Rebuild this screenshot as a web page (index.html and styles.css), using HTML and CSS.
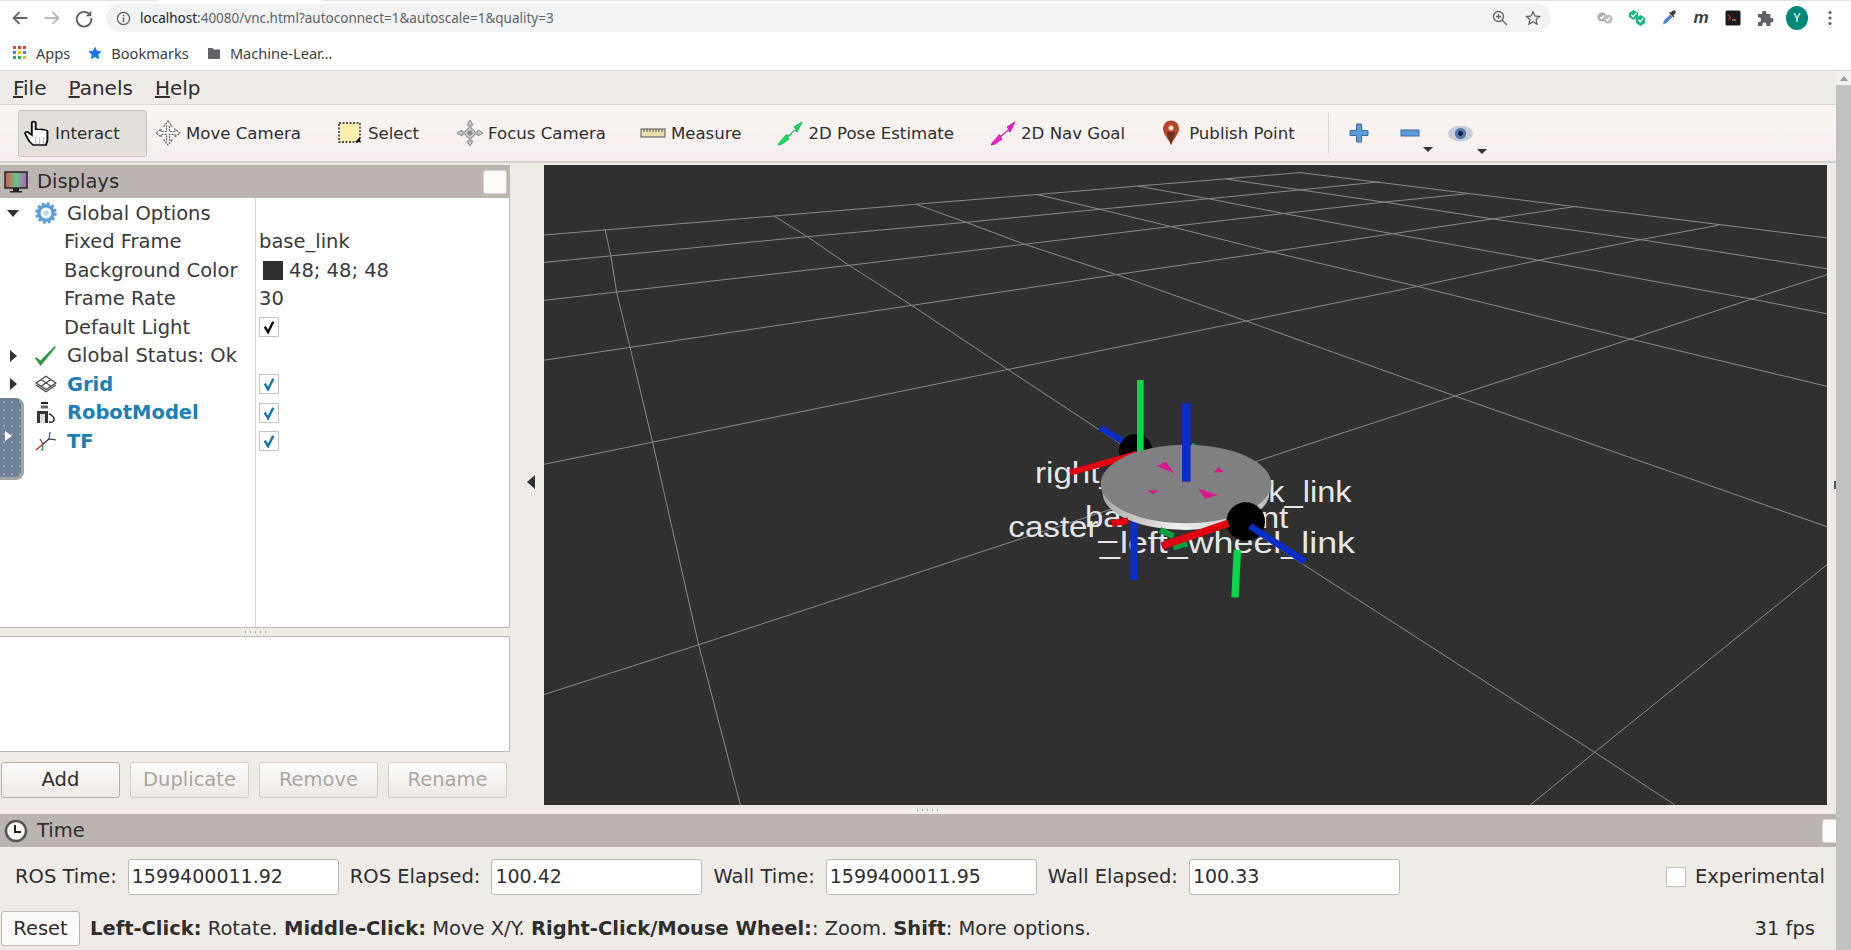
FILE: index.html
```html
<!DOCTYPE html>
<html lang="en">
<head>
    <meta charset="UTF-8">
    <meta name="viewport" content="width=device-width, initial-scale=1.0">
    <title>RViz - noVNC</title>
    <link rel="stylesheet" href="styles.css">
</head>
<body>
    <!-- Browser chrome -->
    <div class="tabline"><div class="tabline-gap"></div></div>
    <div class="nav-bar">
        <svg class="nav-icon" viewBox="0 0 24 24"><path d="M20 12H5M11.5 5.5L5 12l6.500 6.500" fill="none" stroke="#5f6368" stroke-width="2"/></svg>
        <svg class="nav-icon" viewBox="0 0 24 24"><path d="M4 12h15M12.500 5.500L19 12l-6.500 6.500" fill="none" stroke="#b4b7bb" stroke-width="2"/></svg>
        <svg class="nav-icon" viewBox="0 0 24 24"><path d="M18.500 8.500A8 8 0 1 0 20 12" fill="none" stroke="#5f6368" stroke-width="2"/><path d="M20 4v6h-6z" fill="#5f6368"/></svg>
        <div class="address">
            <svg class="info-icon" viewBox="0 0 16 16"><circle cx="8" cy="8" r="6.500" fill="none" stroke="#5f6368" stroke-width="1.400"/><path d="M7.200 7h1.600v5H7.200zM7.200 4h1.600v1.600H7.200z" fill="#5f6368"/></svg>
            <span class="url"><b>localhost</b>:40080/vnc.html?autoconnect=1&amp;autoscale=1&amp;quality=3</span>
            <svg class="lens-icon" viewBox="0 0 16 16"><circle cx="6.500" cy="6.500" r="5" fill="none" stroke="#5f6368" stroke-width="1.300"/><path d="M10.200 10.200L15 15M4 6.500h5M6.500 4v5" fill="none" stroke="#5f6368" stroke-width="1.300"/></svg>
            <svg class="star-icon" viewBox="0 0 16 16"><path d="M8 1.800l1.900 4.200 4.600.5-3.400 3.100.9 4.500L8 11.800l-4 2.300.9-4.500L1.500 6.500 6.100 6z" fill="none" stroke="#5f6368" stroke-width="1.300"/></svg>
        </div>
        <div class="extensions">
            <svg class="ext" viewBox="0 0 18 18"><circle cx="6" cy="8" r="4.500" fill="#aaa"/><circle cx="12" cy="10" r="4.500" fill="#bbb"/><path d="M4 8l1.500 1.500L8 6.500M10 10l1.500 1.500L14 8.500" fill="none" stroke="#fff" stroke-width="1.200"/></svg>
            <svg class="ext" viewBox="0 0 18 18"><path d="M5.500 1l4.500 3v4l-4.500 3L1 8V4z" fill="#14b47c"/><path d="M12.500 6l4.500 3v5l-4.500 3L8 14V9z" fill="#14b47c"/><path d="M3.200 5.800l2 2 3-3.500M10.200 10.800l2 2 3-3.500" fill="none" stroke="#fff" stroke-width="1.400"/></svg>
            <svg class="ext" viewBox="0 0 18 18"><path d="M3 15.500l1-4L10 5.500l2.500 2.500-6 6z" fill="#4a86d8"/><path d="M9.500 4.500l4 4 1-1-1-1 2-2.500a1.800 1.800 0 0 0-2.500-2.500l-2.500 2-1-1z" fill="#3c4043"/></svg>
            <span class="ext ext-m">m</span>
            <svg class="ext" viewBox="0 0 18 18"><rect x="1.500" y="1.500" width="15" height="15" rx="1.500" fill="#1b1b1b"/><path d="M4 6l3 2.500L4 11" fill="none" stroke="#e8453c" stroke-width="1"/><path d="M8 11h4" stroke="#f2b632" stroke-width="1"/></svg>
            <svg class="ext" viewBox="0 0 18 18"><path d="M2 5h4V4a2.200 2.200 0 0 1 4.400 0v1h4v4h1a2.200 2.200 0 0 1 0 4.400h-1V17h-4v-1.500a2 2 0 0 0-4 0V17H2v-4h1a2.200 2.200 0 0 0 0-4.400H2z" fill="#5f6368"/></svg>
            <span class="avatar">Y</span>
            <svg class="ext" viewBox="0 0 18 18"><circle cx="9" cy="3.500" r="1.600" fill="#5f6368"/><circle cx="9" cy="9" r="1.600" fill="#5f6368"/><circle cx="9" cy="14.500" r="1.600" fill="#5f6368"/></svg>
        </div>
    </div>
    <div class="bookmarks">
        <svg class="mark-icon" viewBox="0 0 14 14">
            <g fill="#ea4335"><rect x="0" y="0" width="3" height="3"/><rect x="5" y="0" width="3" height="3"/></g><rect x="10" y="0" width="3" height="3" fill="#ea4335"/>
            <rect x="0" y="5" width="3" height="3" fill="#4285f4"/><rect x="5" y="5" width="3" height="3" fill="#fbbc05"/><rect x="10" y="5" width="3" height="3" fill="#4285f4"/>
            <rect x="0" y="10" width="3" height="3" fill="#34a853"/><rect x="5" y="10" width="3" height="3" fill="#34a853"/><rect x="10" y="10" width="3" height="3" fill="#fbbc05"/>
        </svg>
        <span class="mark">Apps</span>
        <svg class="mark-icon" viewBox="0 0 14 14"><path d="M7 .5l2 4.300 4.700.6-3.400 3.200.9 4.700L7 11l-4.200 2.300.9-4.700L.3 5.400 5 4.800z" fill="#1a73e8"/></svg>
        <span class="mark">Bookmarks</span>
        <svg class="mark-icon" viewBox="0 0 14 14"><path d="M1 2h4.500L7 3.500h6V12a1 1 0 0 1-1 1H2a1 1 0 0 1-1-1z" fill="#5f6368"/></svg>
        <span class="mark">Machine-Lear…</span>
    </div>

    <div class="page">
        <div class="rviz">
            <div class="menu-bar">
                <span><u>F</u>ile</span>
                <span><u>P</u>anels</span>
                <span><u>H</u>elp</span>
            </div>

            <div class="tool-bar">
                <div class="tool active">
                    <svg class="tool-icon" viewBox="0 0 26 26"><g transform="scale(1.300 1)"><path d="M7 25c-2-2-3-3-4-6l-2-5c-1-2 2-3 3-1l2 2V3c0-2 3-2 3 0v7c0-1 3-1 3 0 0-1 3-1 3 .5 0-1 3-1 3 1V20c0 2-1 3-1 5z" fill="#fff" stroke="#111" stroke-width="1.500"/><path d="M9 17v7M12 17v7M15 17v7" stroke="#bbb" stroke-width=".8"/></g></svg>
                    Interact
                </div>
                <div class="tool tool-move">
                    <svg class="tool-icon" viewBox="0 0 26 26"><path d="M13 1l4 5h-2.500v5.500H20V9l5 4-5 4v-2.500h-5.500V20H17l-4 5-4-5h2.500v-5.500H6V17l-5-4 5-4v2.500h5.500V6H9z" fill="#eee" stroke="#666" stroke-width="1.200" stroke-dasharray="2 1"/></svg>
                    Move Camera
                </div>
                <div class="tool tool-select">
                    <svg class="tool-icon" viewBox="0 0 26 26"><rect x="2" y="3" width="21" height="19" fill="#fbeeb0" stroke="#222" stroke-width="1.400" stroke-dasharray="2 1.500"/><path d="M18 22h5v-5z" fill="#111"/></svg>
                    Select
                </div>
                <div class="tool tool-focus">
                    <svg class="tool-icon" viewBox="0 0 26 26"><path d="M13 0l3 5h-2v3.200a5 5 0 0 1 3.800 3.800H21v-2l5 3-5 3v-2h-3.200a5 5 0 0 1-3.800 3.800V21h2l-3 5-3-5h2v-3.200A5 5 0 0 1 8.200 14H5v2l-5-3 5-3v2h3.200A5 5 0 0 1 12 8.200V5h-2z" fill="#c9c9c9" stroke="#888" stroke-width="1"/><circle cx="13" cy="13" r="2.500" fill="#888"/></svg>
                    Focus Camera
                </div>
                <div class="tool">
                    <svg class="tool-icon" viewBox="0 0 26 26"><rect x="1" y="9" width="24" height="8" fill="#eadfae" stroke="#555" stroke-width="1"/><path d="M4 9v3M7 9v3M10 9v3M13 9v3M16 9v3M19 9v3M22 9v3" stroke="#555" stroke-width="1"/></svg>
                    Measure
                </div>
                <div class="tool">
                    <svg class="tool-icon" viewBox="0 0 26 26"><path d="M25 2L17 7l2 2.500-8 7-1.500-2L3 22l-2 3 4-1 7-5-2-2 8-7 2 2z" fill="#10e060" stroke="#0fbc55" stroke-width="1"/></svg>
                    2D Pose Estimate
                </div>
                <div class="tool tool-nav">
                    <svg class="tool-icon" viewBox="0 0 26 26"><path d="M25 2L17 7l2 2.500-8 7-1.500-2L3 22l-2 3 4-1 7-5-2-2 8-7 2 2z" fill="#f020c0" stroke="#d018a4" stroke-width="1"/></svg>
                    2D Nav Goal
                </div>
                <div class="tool tool-narrow">
                    <svg class="tool-icon" viewBox="0 0 18 26"><path d="M9 25C6 18 1 14 1 8.500a8 8 0 0 1 16 0C17 14 12 18 9 25z" fill="#b5442a"/><path d="M9 25C7 19 5 15 5 12h8c0 3-2 7-4 13z" fill="#6b3320"/><circle cx="9" cy="8" r="2.500" fill="#fbe3c8"/></svg>
                    Publish Point
                </div>
                <div class="tool-sep"></div>
                <svg class="view-icon" viewBox="0 0 20 20"><path d="M7.500 1h5v6.500H19v5h-6.500V19h-5v-6.500H1v-5h6.500z" fill="#5b9bd8" stroke="#3a6ea8" stroke-width="1"/></svg>
                <div class="view-drop">
                    <svg class="view-icon" viewBox="0 0 20 20"><rect x="1" y="7" width="18" height="6" fill="#5b9bd8" stroke="#3a6ea8" stroke-width="1"/></svg>
                    <span class="drop-arrow"></span>
                </div>
                <div class="view-drop">
                    <svg class="view-icon eye" viewBox="0 0 24 20"><ellipse cx="12" cy="10" rx="11" ry="7" fill="#c6ccd8"/><circle cx="12" cy="10" r="5" fill="#5a74a8"/><circle cx="12" cy="10" r="2.200" fill="#0c1c48"/></svg>
                    <span class="drop-arrow"></span>
                </div>
            </div>

            <div class="workspace">
                <div class="left-dock">
                    <div class="dock-title">
                        <svg class="title-icon" viewBox="0 0 24 24">
                            <defs>
                                <linearGradient id="rainbow" x1="0" x2="1"><stop offset="0" stop-color="#d8564a"/><stop offset=".5" stop-color="#6fc28a"/><stop offset="1" stop-color="#b060b8"/></linearGradient>
                            </defs>
                            <rect x="1" y="2" width="22" height="16" fill="url(#rainbow)" stroke="#222" stroke-width="1.500"/><path d="M9 18h6v3H9zM6 21h12v1.500H6z" fill="#222"/>
                        </svg>
                        <span>Displays</span>
                        <span class="title-check"></span>
                    </div>
                    <div class="tree">
                        <div class="row">
                            <span class="arrow-down"></span>
                            <svg class="row-icon" viewBox="0 0 20 20"><circle cx="10" cy="10" r="6.500" fill="none" stroke="#5a9cd8" stroke-width="3"/><circle cx="10" cy="10" r="8.500" fill="none" stroke="#5a9cd8" stroke-width="2.500" stroke-dasharray="2.500 2"/><circle cx="10" cy="10" r="2.500" fill="#b8d8f4"/></svg>
                            <span class="name">Global Options</span>
                        </div>
                        <div class="row child"><span class="name">Fixed Frame</span><span class="value">base_link</span></div>
                        <div class="row child"><span class="name">Background Color</span><span class="value"><i class="swatch"></i>48; 48; 48</span></div>
                        <div class="row child"><span class="name">Frame Rate</span><span class="value">30</span></div>
                        <div class="row child"><span class="name">Default Light</span><span class="value"><svg class="check dark" viewBox="0 0 19 19"><path d="M5 9l3.500 6L14 4" fill="none" stroke-width="2.600"/></svg></span></div>
                        <div class="row">
                            <span class="arrow-right"></span>
                            <svg class="row-icon" viewBox="0 0 20 20"><path d="M1 11l4 3L18 1l1 1L5 19 0 12z" fill="#2b9a3e"/></svg>
                            <span class="name">Global Status: Ok</span>
                        </div>
                        <div class="row">
                            <span class="arrow-right"></span>
                            <svg class="row-icon" viewBox="0 0 20 20"><path d="M10 3l9 6-9 6-9-6zM5.500 6l9 6M14.500 6l-9 6M1 11l9 6 9-6" fill="none" stroke="#444" stroke-width="1.100"/></svg>
                            <span class="name active-name">Grid</span>
                            <span class="value"><svg class="check" viewBox="0 0 19 19"><path d="M5 9l3.500 6L14 4" fill="none" stroke-width="2.600"/></svg></span>
                        </div>
                        <div class="row">
                            <svg class="row-icon" viewBox="0 0 22 22"><rect x="6" y="0" width="7" height="2" fill="#222"/><rect x="6" y="3.500" width="7" height="3" fill="#666"/><path d="M2 9h11v12H2z" fill="#333"/><path d="M5 12h5v9H5z" fill="#ddd"/><path d="M14 20c3 1 6-1 5-4-1-2-4-4-5-4" fill="none" stroke="#222" stroke-width="1.500"/></svg>
                            <span class="name active-name">RobotModel</span>
                            <span class="value"><svg class="check" viewBox="0 0 19 19"><path d="M5 9l3.500 6L14 4" fill="none" stroke-width="2.600"/></svg></span>
                        </div>
                        <div class="row">
                            <svg class="row-icon" viewBox="0 0 22 22"><path d="M8 14l6-5 7 1" fill="none" stroke="#333" stroke-width="1.200"/><path d="M14 9l1-7" stroke="#2255cc" stroke-width="1.200"/><path d="M8 14l-7 6" stroke="#dd2222" stroke-width="1.500"/><path d="M8 14l-1 7" stroke="#22aa44" stroke-width="1.500"/><path d="M8 14L5 9" stroke="#aa2222" stroke-width="1.200"/></svg>
                            <span class="name active-name">TF</span>
                            <span class="value"><svg class="check" viewBox="0 0 19 19"><path d="M5 9l3.500 6L14 4" fill="none" stroke-width="2.600"/></svg></span>
                        </div>
                    </div>
                    <div class="split-dots"></div>
                    <div class="help-box"></div>
                    <div class="dock-buttons">
                        <div class="btn">Add</div>
                        <div class="btn off">Duplicate</div>
                        <div class="btn off">Remove</div>
                        <div class="btn off">Rename</div>
                    </div>
                </div>

                <div class="collapse"><span class="collapse-arrow"></span></div>

                <div class="view3d">
                    <svg class="grid-lines" viewBox="5 12 1535 1518" preserveAspectRatio="none">
                        <g fill="none" stroke="#8a8a8a" stroke-width="1">
                            <path vector-effect="non-scaling-stroke" d="M5 178L280 133 450 105 595 82 715 62 820 45 910 30"/>
                            <path vector-effect="non-scaling-stroke" d="M5 243L320 182 510 148 670 117 800 92 905 72 1005 52"/>
                            <path vector-effect="non-scaling-stroke" d="M5 333L370 250 580 200 755 158 890 127 1010 100 1110 80"/>
                            <path vector-effect="non-scaling-stroke" d="M5 475L445 345 690 272 875 218 1020 175 1140 140 1240 110"/>
                            <path vector-effect="non-scaling-stroke" d="M5 722L560 497 845 382 1050 300 1195 238 1320 188 1410 155"/>
                            <path vector-effect="non-scaling-stroke" d="M5 1268L190 1150 1095 560 1305 425 1450 330 1540 272"/>
                            <path vector-effect="non-scaling-stroke" d="M1185 1530L1262 1405 1540 960"/>
                            <path vector-effect="non-scaling-stroke" d="M910 30L1540 185"/>
                            <path vector-effect="non-scaling-stroke" d="M820 45L1010 100 1140 140 1320 190 1540 258"/>
                            <path vector-effect="non-scaling-stroke" d="M715 62L800 92 890 127 1020 175 1195 238 1450 330 1540 365"/>
                            <path vector-effect="non-scaling-stroke" d="M595 82L670 117 755 158 875 218 1050 300 1305 425 1540 537"/>
                            <path vector-effect="non-scaling-stroke" d="M450 105L510 148 580 200 690 272 845 382 1095 560 1540 870"/>
                            <path vector-effect="non-scaling-stroke" d="M280 133L320 182 370 250 445 345 560 497 910 955 1262 1405 1358 1530"/>
                            <path vector-effect="non-scaling-stroke" d="M78 165L85 228 92 315 108 445 135 670 190 1150 240 1530"/>
                        </g>
                    </svg>
                    <svg class="robot" viewBox="0 0 1260 750">
                        <defs>
                            <linearGradient id="discSide" x1="0" x2="1"><stop offset="0" stop-color="#a8a8a8"/><stop offset=".45" stop-color="#f0f0f0"/><stop offset="1" stop-color="#bdbdbd"/></linearGradient>
                        </defs>
                        <g class="robot-labels">
                            <text x="225" y="370" textLength="249" lengthAdjust="spacingAndGlyphs">right_</text>
                            <text x="925" y="425" textLength="250" lengthAdjust="spacingAndGlyphs">k_link</text>
                            <text x="375" y="500" textLength="110" lengthAdjust="spacingAndGlyphs">ba</text>
                            <text x="902" y="505" textLength="83" lengthAdjust="spacingAndGlyphs">nt</text>
                            <text x="145" y="530" textLength="326" lengthAdjust="spacingAndGlyphs">caster_</text>
                            <text x="420" y="578" textLength="765" lengthAdjust="spacingAndGlyphs">_left_wheel_link</text>
                        </g>
                        <path d="M522 480V660" stroke="#0a2cc8" stroke-width="22"/>
                        <path d="M420 203L495 248" stroke="#0a2cc8" stroke-width="18"/>
                        <circle cx="527" cy="272" r="50" fill="#000"/>
                        <path d="M541 60V290" stroke="#00d84a" stroke-width="20"/>
                        <path d="M695 255L715 265" stroke="#00b048" stroke-width="14"/>
                        <path d="M330 338L530 282" stroke="#e00012" stroke-width="18"/>
                        <ellipse cx="678" cy="400" rx="250" ry="110" fill="url(#discSide)"/>
                        <ellipse cx="678" cy="372" rx="256" ry="118" fill="#808080"/>
                        <path d="M590 318L618 305 642 340zM760 338L775 322 792 335zM562 390L598 392 578 402zM715 385L772 405 735 417z" fill="#d8188c"/>
                        <path d="M679 130V365" stroke="#0a2cc8" stroke-width="26"/>
                        <path d="M455 490L505 482" stroke="#e00012" stroke-width="20"/>
                        <path d="M600 510L640 528M640 562L682 550" stroke="#0aa040" stroke-width="18"/>
                        <path d="M832 570L825 712" stroke="#00d84a" stroke-width="22"/>
                        <circle cx="857" cy="485" r="58" fill="#000"/>
                        <path d="M605 558L805 490" stroke="#e00012" stroke-width="22"/>
                        <path d="M870 498L1035 605" stroke="#0a2cc8" stroke-width="20"/>
                    </svg>
                </div>

                <div class="right-gap"><span class="right-mark"></span></div>
            </div>
            <div class="split-dots wide"></div>

            <div class="time-title">
                <svg class="title-icon" viewBox="0 0 24 24"><circle cx="12" cy="12" r="10" fill="#fff" stroke="#555" stroke-width="2.500"/><path d="M11 6v7h6" fill="none" stroke="#222" stroke-width="2"/></svg>
                <span>Time</span>
                <span class="title-check"></span>
            </div>
            <div class="time-row">
                <span>ROS Time:</span><div class="field">1599400011.92</div>
                <span>ROS Elapsed:</span><div class="field">100.42</div>
                <span>Wall Time:</span><div class="field">1599400011.95</div>
                <span>Wall Elapsed:</span><div class="field">100.33</div>
                <label class="exp"><span class="exp-box"></span>Experimental</label>
            </div>
            <div class="status-row">
                <div class="reset">Reset</div>
                <span class="hint"><b>Left-Click:</b> Rotate. <b>Middle-Click:</b> Move X/Y. <b>Right-Click/Mouse Wheel:</b>: Zoom. <b>Shift</b>: More options.</span>
                <span class="fps">31 fps</span>
            </div>
        </div>

        <div class="scrollbar"><span class="scroll-up"></span><div class="scroll-thumb"></div></div>
        <div class="vnc-handle"><span class="handle-arrow"></span></div>
    </div>
</body>
</html>
```

FILE: styles.css
```css
body {
    margin: 0;
    height: 950px;
    overflow: hidden;
    display: flex;
    flex-direction: column;
    background-color: #fff;
    font-family: "Noto Sans", sans-serif;
}

/* browser chrome */

.tabline {
    height: 1px;
    background-color: #dee1e6;
}

.tabline-gap {
    width: 165px;
    height: 1px;
    margin-left: 157px;
    background-color: #fff;
}

.nav-bar {
    height: 34px;
    display: flex;
    align-items: center;
    padding: 0 0 0 9px;
}

.nav-icon {
    width: 22px;
    height: 22px;
    margin-right: 10px;
}

.address {
    width: 1445px;
    height: 28px;
    margin-left: 1px;
    display: flex;
    align-items: center;
    border-radius: 14px;
    background-color: #f1f3f4;
    color: #5f6368;
}

.info-icon {
    width: 15px;
    height: 15px;
    margin: 0 9px 0 10px;
}

.url {
    flex: 1;
    font-size: 13.500px;
    white-space: nowrap;
}

.url b {
    font-weight: 400;
    color: #202124;
}

.lens-icon,
.star-icon {
    width: 16px;
    height: 16px;
}

.star-icon {
    margin: 0 10px 0 17px;
}

.extensions {
    margin-left: 45px;
    display: flex;
    align-items: center;
    gap: 14px;
}

.ext {
    width: 18px;
    height: 18px;
}

.ext-m {
    font: italic 700 17px/18px "Liberation Sans", sans-serif;
    color: #3c4043;
    text-align: center;
}

.avatar {
    width: 22px;
    height: 24px;
    margin: 0 -1px 0 -2px;
    border-radius: 50%;
    background-color: #00897b;
    color: #fff;
    font-size: 12px;
    line-height: 24px;
    text-align: center;
}

.bookmarks {
    height: 35px;
    display: flex;
    align-items: center;
    padding-left: 13px;
    border-bottom: 1px solid #dadce0;
    font-size: 14.600px;
    color: #3c4043;
}

.mark-icon {
    width: 14px;
    height: 14px;
    margin-right: 9px;
}

.mark {
    margin-right: 18px;
}

/* rviz window */

.page {
    flex: 1;
    position: relative;
    display: flex;
    min-height: 0;
}

.rviz {
    flex: 1;
    min-width: 0;
    display: flex;
    flex-direction: column;
    background-color: #efebe7;
    font-family: "DejaVu Sans", sans-serif;
    font-size: 19.500px;
    color: #2e2e2e;
}

.menu-bar {
    height: 33px;
    flex-shrink: 0;
    display: flex;
    align-items: center;
    gap: 22px;
    padding-left: 13px;
    border-bottom: 1px solid #dcd8d3;
    font-size: 20px;
}

.tool-bar {
    height: 58px;
    flex-shrink: 0;
    display: flex;
    align-items: center;
    padding-left: 18px;
    background: linear-gradient(#fbf6f1, #f5edef);
    border-bottom: 2px solid #d6d1cc;
    box-sizing: border-box;
    font-size: 16.600px;
}

.tool {
    display: flex;
    align-items: center;
    margin-right: 36px;
    white-space: nowrap;
}

.tool-select {
    margin-right: 38px;
}

.tool-focus {
    margin-right: 34px;
}

.tool-nav {
    margin-right: 33px;
}

.tool-narrow {
    margin-right: 33px;
}

.tool.active {
    width: 129px;
    height: 47px;
    margin-right: 8px;
    padding-left: 5px;
    box-sizing: border-box;
    background-color: #e3dfdb;
    border: 1px solid #c6c2be;
    border-radius: 3px;
}

.tool-icon {
    width: 26px;
    height: 26px;
    margin-right: 5px;
    flex-shrink: 0;
}

.tool-sep {
    width: 1px;
    height: 40px;
    background-color: #dcd8d4;
}

.view-icon {
    width: 20px;
    height: 20px;
    margin-left: 20px;
    display: block;
}

.view-icon.eye {
    width: 27px;
    height: 23px;
    margin-left: 16px;
}

.view-drop {
    position: relative;
    margin-left: 11px;
}

.drop-arrow {
    position: absolute;
    right: -13px;
    bottom: -9px;
    border: 5px solid transparent;
    border-top-color: #333;
    border-bottom-width: 0;
}

.workspace {
    height: 640px;
    flex-shrink: 0;
    margin-top: 2px;
    display: flex;
}

.left-dock {
    width: 510px;
    display: flex;
    flex-direction: column;
}

.dock-title,
.time-title {
    height: 33px;
    flex-shrink: 0;
    display: flex;
    align-items: center;
    background-color: #bcb4b1;
}

.title-icon {
    width: 24px;
    height: 24px;
    margin: 0 9px 0 4px;
}

.title-check {
    width: 22px;
    height: 22px;
    margin-left: auto;
    margin-right: 3px;
    background-color: #fbfbfb;
    border: 1px solid #d8d4d0;
    border-radius: 3px;
}

.time-title .title-check {
    margin-right: -10px;
}

.tree {
    height: 430px;
    flex-shrink: 0;
    padding-top: 1px;
    box-sizing: border-box;
    border: 1px solid #bdb9b5;
    border-top: none;
    border-left: none;
    background: linear-gradient(#d6d6d6, #d6d6d6) 255px 0 / 1px 100% no-repeat #fff;
}

.row {
    height: 28.500px;
    display: flex;
    align-items: center;
    position: relative;
    padding-left: 35px;
    color: #3a3a3a;
}

.row.child {
    padding-left: 64px;
}

.arrow-down,
.arrow-right {
    position: absolute;
    border-style: solid;
    border-color: transparent;
}

.arrow-down {
    left: 7px;
    top: 11px;
    border-width: 7px 6px 0;
    border-top-color: #333;
}

.arrow-right {
    left: 10px;
    top: 8px;
    border-width: 6px 0 6px 7px;
    border-left-color: #333;
}

.row-icon {
    width: 22px;
    height: 22px;
    margin-right: 10px;
    flex-shrink: 0;
}

.name {
    white-space: nowrap;
}

.active-name {
    font-weight: 700;
    color: #1a80b6;
}

.value {
    position: absolute;
    left: 259px;
    display: flex;
    align-items: center;
    white-space: nowrap;
}

.swatch {
    width: 20px;
    height: 19px;
    margin: 0 6px 0 4px;
    background-color: #303030;
}

.check {
    width: 20px;
    height: 20px;
    box-sizing: border-box;
    border: 1px solid #c4c4c4;
    stroke: #0f78b4;
}

.check.dark {
    stroke: #111;
}

.split-dots {
    height: 8px;
    flex-shrink: 0;
    display: flex;
    align-items: center;
    justify-content: center;
}

.split-dots::after {
    content: "";
    width: 21px;
    height: 2px;
    background: repeating-linear-gradient(90deg, #a8a8a8 0 1px, transparent 1px 5px);
}

.split-dots.wide {
    height: 9px;
    padding-left: 18px;
}

.help-box {
    height: 116px;
    flex-shrink: 0;
    box-sizing: border-box;
    background-color: #fff;
    border: 1px solid #bdb9b5;
    border-left: none;
}

.dock-buttons {
    display: grid;
    grid-template-columns: repeat(4, 1fr);
    gap: 10px;
    margin: 10px 3px 0 1px;
}

.btn {
    height: 36px;
    box-sizing: border-box;
    line-height: 34px;
    text-align: center;
    background: linear-gradient(#fdfcfb, #eee9e5);
    border: 1px solid #b5b0ab;
    border-radius: 3px;
}

.btn.off {
    border-color: #d2cdc8;
    color: #a9a6a3;
}

.collapse {
    width: 34px;
    display: flex;
    align-items: center;
    justify-content: center;
}

.collapse-arrow {
    margin-left: 8px;
    margin-bottom: 6px;
    border-style: solid;
    border-color: transparent #333 transparent transparent;
    border-width: 7px 8px 7px 0;
}

.view3d {
    width: 1283px;
    height: 640px;
    position: relative;
    overflow: hidden;
    background-color: #303030;
}

.grid-lines {
    width: 100%;
    height: 100%;
    display: block;
}

.robot {
    position: absolute;
    left: 416px;
    top: 195px;
    width: 420px;
    height: 250px;
}

.robot-labels {
    font-family: "Liberation Sans", sans-serif;
    font-size: 88px;
    fill: #e6e6e6;
}

.right-gap {
    flex: 1;
    display: flex;
    align-items: center;
    justify-content: flex-end;
}

.right-mark {
    width: 2px;
    height: 8px;
    background-color: #555;
}

.time-row {
    height: 59px;
    flex-shrink: 0;
    display: flex;
    align-items: center;
    gap: 11px;
    padding-left: 15px;
}

.field {
    width: 211px;
    height: 36px;
    box-sizing: border-box;
    padding-left: 3px;
    font-size: 19px;
    line-height: 33px;
    background-color: #fff;
    border: 1px solid #bdb9b5;
    border-radius: 3px;
}

.exp {
    margin-left: auto;
    margin-right: 11px;
    display: flex;
    align-items: center;
    gap: 9px;
}

.exp-box {
    width: 20px;
    height: 20px;
    box-sizing: border-box;
    background-color: #fff;
    border: 1px solid #c4c0bc;
}

.status-row {
    flex: 1;
    display: flex;
    align-items: center;
    padding: 0 21px 0 1px;
}

.reset {
    width: 79px;
    height: 35px;
    box-sizing: border-box;
    line-height: 33px;
    text-align: center;
    background-color: #fbfaf9;
    border: 1px solid #bdb9b5;
    border-radius: 3px;
}

.hint {
    margin-left: 10px;
}

.fps {
    margin-left: auto;
}

/* noVNC page bits */

.scrollbar {
    width: 15px;
    display: flex;
    flex-direction: column;
    align-items: center;
    background-color: #f3f1ef;
}

.scroll-up {
    margin: 5px 0 4px;
    border-style: solid;
    border-color: transparent transparent #9a9a9a;
    border-width: 0 4px 5px;
}

.scroll-thumb {
    flex: 1;
    width: 15px;
    background-color: #c1c1c1;
}

.vnc-handle {
    position: absolute;
    left: 0;
    top: 327px;
    width: 21px;
    height: 79px;
    border-right: 3px solid #a3a3a3;
    border-bottom: 3px solid #a3a3a3;
    border-radius: 0 8px 8px 0;
    background-color: #6e8195;
    background-image: radial-gradient(circle, #93a1b0 1.100px, transparent 1.300px);
    background-size: 8px 8px;
}

.handle-arrow {
    position: absolute;
    left: 5px;
    top: 33px;
    border-style: solid;
    border-color: transparent transparent transparent #fff;
    border-width: 5px 0 5px 7px;
}
```
